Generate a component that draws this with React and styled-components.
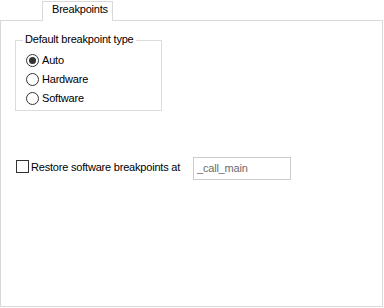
import React from "react";
import styled, { createGlobalStyle } from "styled-components";

const Global = createGlobalStyle`
  html, body { margin: 0; padding: 0; background: #ffffff; }
  body { font-family: "Liberation Sans", Arial, sans-serif; font-size: 11px; color: #000; }
  * { box-sizing: border-box; }
`;

const Page = styled.div`
  width: 383px;
  height: 307px;
  display: flex;
  flex-direction: column;
  letter-spacing: -0.2px;
`;

const TabStrip = styled.div`
  display: flex;
  padding: 1px 0 0 42px;
`;

const Tab = styled.div`
  position: relative;
  z-index: 1;
  width: 71px;
  height: 20px;
  margin-bottom: -1px;
  padding: 1px 0 0 9px;
  border: 1px solid #d9d9d9;
  border-bottom: none;
  background: #ffffff;
  line-height: 13px;
`;

const Panel = styled.div`
  flex: 1;
  border: 1px solid #d9d9d9;
  padding: 19px 0 0 14px;
  display: flex;
  flex-direction: column;
  align-items: flex-start;
`;

const Group = styled.div`
  width: 147px;
  height: 71px;
  border: 1px solid #dcdcdc;
  display: flex;
  flex-direction: column;
  align-items: flex-start;
`;

const Legend = styled.div`
  margin: -8px 0 0 7px;
  padding: 0 2px;
  background: #ffffff;
  line-height: 13px;
`;

const RadioList = styled.div`
  display: flex;
  flex-direction: column;
  padding: 5px 0 0 10px;
`;

const RadioRow = styled.label`
  display: flex;
  align-items: center;
  height: 19px;
  gap: 3px;
  line-height: 13px;
`;

const RadioCircle = styled.span`
  width: 13px;
  height: 13px;
  border-radius: 50%;
  border: 1px solid #333333;
  display: flex;
  align-items: center;
  justify-content: center;
  &::after {
    content: "";
    width: 7px;
    height: 7px;
    border-radius: 50%;
    background: ${(p) => (p.$checked ? "#333333" : "transparent")};
  }
`;

const OptionRow = styled.div`
  display: flex;
  align-items: flex-start;
  margin: 46px 0 0 1px;
  height: 23px;
`;

const CheckLabel = styled.label`
  width: 177px;
  display: flex;
  align-items: flex-start;
  gap: 2px;
  line-height: 13px;
`;

const CheckBox = styled.span`
  width: 13px;
  height: 13px;
  margin-top: 3px;
  border: 1px solid #333333;
  background: #ffffff;
`;

const CheckText = styled.span`
  margin-top: 4px;
`;

const TextBox = styled.div`
  width: 98px;
  height: 23px;
  border: 1px solid #cccccc;
  background: #ffffff;
  color: #6d6d6d;
  padding: 4px 0 0 3px;
  line-height: 13px;
`;

const options = [
  { label: "Auto", checked: true },
  { label: "Hardware", checked: false },
  { label: "Software", checked: false },
];

export default function App() {
  return (
    <>
      <Global />
      <Page>
        <TabStrip>
          <Tab>Breakpoints</Tab>
        </TabStrip>
        <Panel>
          <Group>
            <Legend>Default breakpoint type</Legend>
            <RadioList>
              {options.map((o) => (
                <RadioRow key={o.label}>
                  <RadioCircle $checked={o.checked} />
                  <span>{o.label}</span>
                </RadioRow>
              ))}
            </RadioList>
          </Group>
          <OptionRow>
            <CheckLabel>
              <CheckBox />
              <CheckText>Restore software breakpoints at</CheckText>
            </CheckLabel>
            <TextBox>_call_main</TextBox>
          </OptionRow>
        </Panel>
      </Page>
    </>
  );
}
